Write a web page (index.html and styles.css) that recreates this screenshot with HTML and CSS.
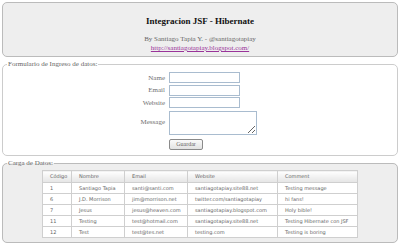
FILE: index.html
```html
<!DOCTYPE html>
<html lang="es">
<head>
    <meta charset="UTF-8">
    <title>Integracion JSF - Hibernate</title>
    <link rel="stylesheet" href="styles.css">
</head>
<body>
    <div class="header">
        <h1>Integracion JSF - Hibernate</h1>
        <div class="byline">By Santiago Tapia Y. - @santiagotapiay</div>
        <a href="#" class="blog-link">http://santiagotapiay.blogspot.com/</a>
    </div>

    <fieldset class="form-box">
        <legend>Formulario de Ingreso de datos:</legend>
        <form class="entry-form">
            <label for="name">Name</label>
            <input type="text" id="name">
            <label for="email">Email</label>
            <input type="text" id="email">
            <label for="website">Website</label>
            <input type="text" id="website">
            <label for="message">Message</label>
            <textarea id="message"></textarea>
            <span></span>
            <div><button type="button">Guardar</button></div>
        </form>
    </fieldset>

    <fieldset class="data-box">
        <legend>Carga de Datos:</legend>
        <table class="data-table">
            <colgroup>
                <col class="col-id">
                <col class="col-name">
                <col class="col-email">
                <col class="col-web">
                <col class="col-comment">
            </colgroup>
            <thead>
                <tr>
                    <th>Código</th>
                    <th>Nombre</th>
                    <th>Email</th>
                    <th>Website</th>
                    <th>Comment</th>
                </tr>
            </thead>
            <tbody>
                <tr>
                    <td>1</td>
                    <td>Santiago Tapia</td>
                    <td>santi@santi.com</td>
                    <td>santiagotapiay.site88.net</td>
                    <td>Testing message</td>
                </tr>
                <tr>
                    <td>6</td>
                    <td>J.D. Morrison</td>
                    <td>jim@morrison.net</td>
                    <td>twitter.com/santiagotapiay</td>
                    <td>hi fans!</td>
                </tr>
                <tr>
                    <td>7</td>
                    <td>Jesus</td>
                    <td>jesus@heaven.com</td>
                    <td>santiagotapiay.blogspot.com</td>
                    <td>Holy bible!</td>
                </tr>
                <tr>
                    <td>11</td>
                    <td>Testing</td>
                    <td>test@hotmail.com</td>
                    <td>santiagotapiay.site88.net</td>
                    <td>Testing Hibernate con JSF</td>
                </tr>
                <tr>
                    <td>12</td>
                    <td>Test</td>
                    <td>test@tes.net</td>
                    <td>testing.com</td>
                    <td>Testing is boring</td>
                </tr>
            </tbody>
        </table>
    </fieldset>
</body>
</html>
```

FILE: styles.css
```css
body {
    margin: 2px;
    font-family: "Liberation Serif", serif;
    font-size: 7px;
    color: #555;
    background-color: white;
}

.header {
    height: 41px;
    padding-top: 12px;
    background-color: #eeeeee;
    border: 1px solid #bbb;
    border-radius: 5px;
    text-align: center;
}

.header h1 {
    margin: 0 0 8px;
    font-size: 9px;
    line-height: 12px;
    color: #111;
}

.byline {
    line-height: 9px;
    color: #666;
}

.blog-link {
    display: block;
    width: max-content;
    margin: 0 auto;
    line-height: 9px;
    color: #993399;
}

fieldset {
    margin: 3px 0 0 0;
    padding: 0;
    border-radius: 5px;
    min-width: 0;
}

legend {
    padding: 0 1px;
    margin-left: 4px;
    font-size: 7px;
    line-height: 8px;
    color: #666;
}

.form-box {
    padding-bottom: 5px;
    border: 1px solid #ccc;
    background-color: white;
}

.entry-form {
    display: grid;
    grid-template-columns: 162px auto;
    column-gap: 4px;
    row-gap: 1.5px;
    align-items: center;
    justify-content: start;
    padding-top: 4px;
}

.entry-form label {
    justify-self: end;
    font-weight: normal;
    color: #707070;
}

.entry-form input {
    width: 71px;
    height: 11px;
    padding: 0;
    border: 1px solid #a9bccf;
    box-sizing: border-box;
}

.entry-form textarea {
    display: block;
    width: 88px;
    height: 24px;
    margin-top: 1px;
    padding: 0;
    border: 1px solid #a9bccf;
    box-sizing: border-box;
    resize: both;
}

.entry-form button {
    display: block;
    width: 34px;
    height: 11px;
    margin-top: 3px;
    padding: 0;
    font-family: "Liberation Serif", serif;
    font-size: 6px;
    line-height: 9px;
    color: #666;
    background: linear-gradient(#fafafa, #e2e2e2);
    border: 1px solid #8a8a8a;
    border-radius: 2px;
}

.data-box {
    padding-bottom: 4px;
    border: 1px solid #bbb;
    background-color: #eeeeee;
}

.data-table {
    margin: 3px auto 0;
    table-layout: fixed;
    border-collapse: collapse;
    background-color: white;
    font-family: "DejaVu Sans", sans-serif;
    font-size: 5px;
    color: #666;
}

.col-id { width: 29px; }
.col-name { width: 53px; }
.col-email { width: 63px; }
.col-web { width: 90px; }
.col-comment { width: 80px; }

.data-table th,
.data-table td {
    height: 11px;
    padding: 0 0 0 7px;
    border: 1px solid #cfcfcf;
    box-sizing: border-box;
    line-height: 7px;
    text-align: left;
    font-weight: normal;
    white-space: nowrap;
    overflow: hidden;
}

.data-table th {
    height: 12px;
    background: linear-gradient(#ffffff, #e4e4e4);
}
```
